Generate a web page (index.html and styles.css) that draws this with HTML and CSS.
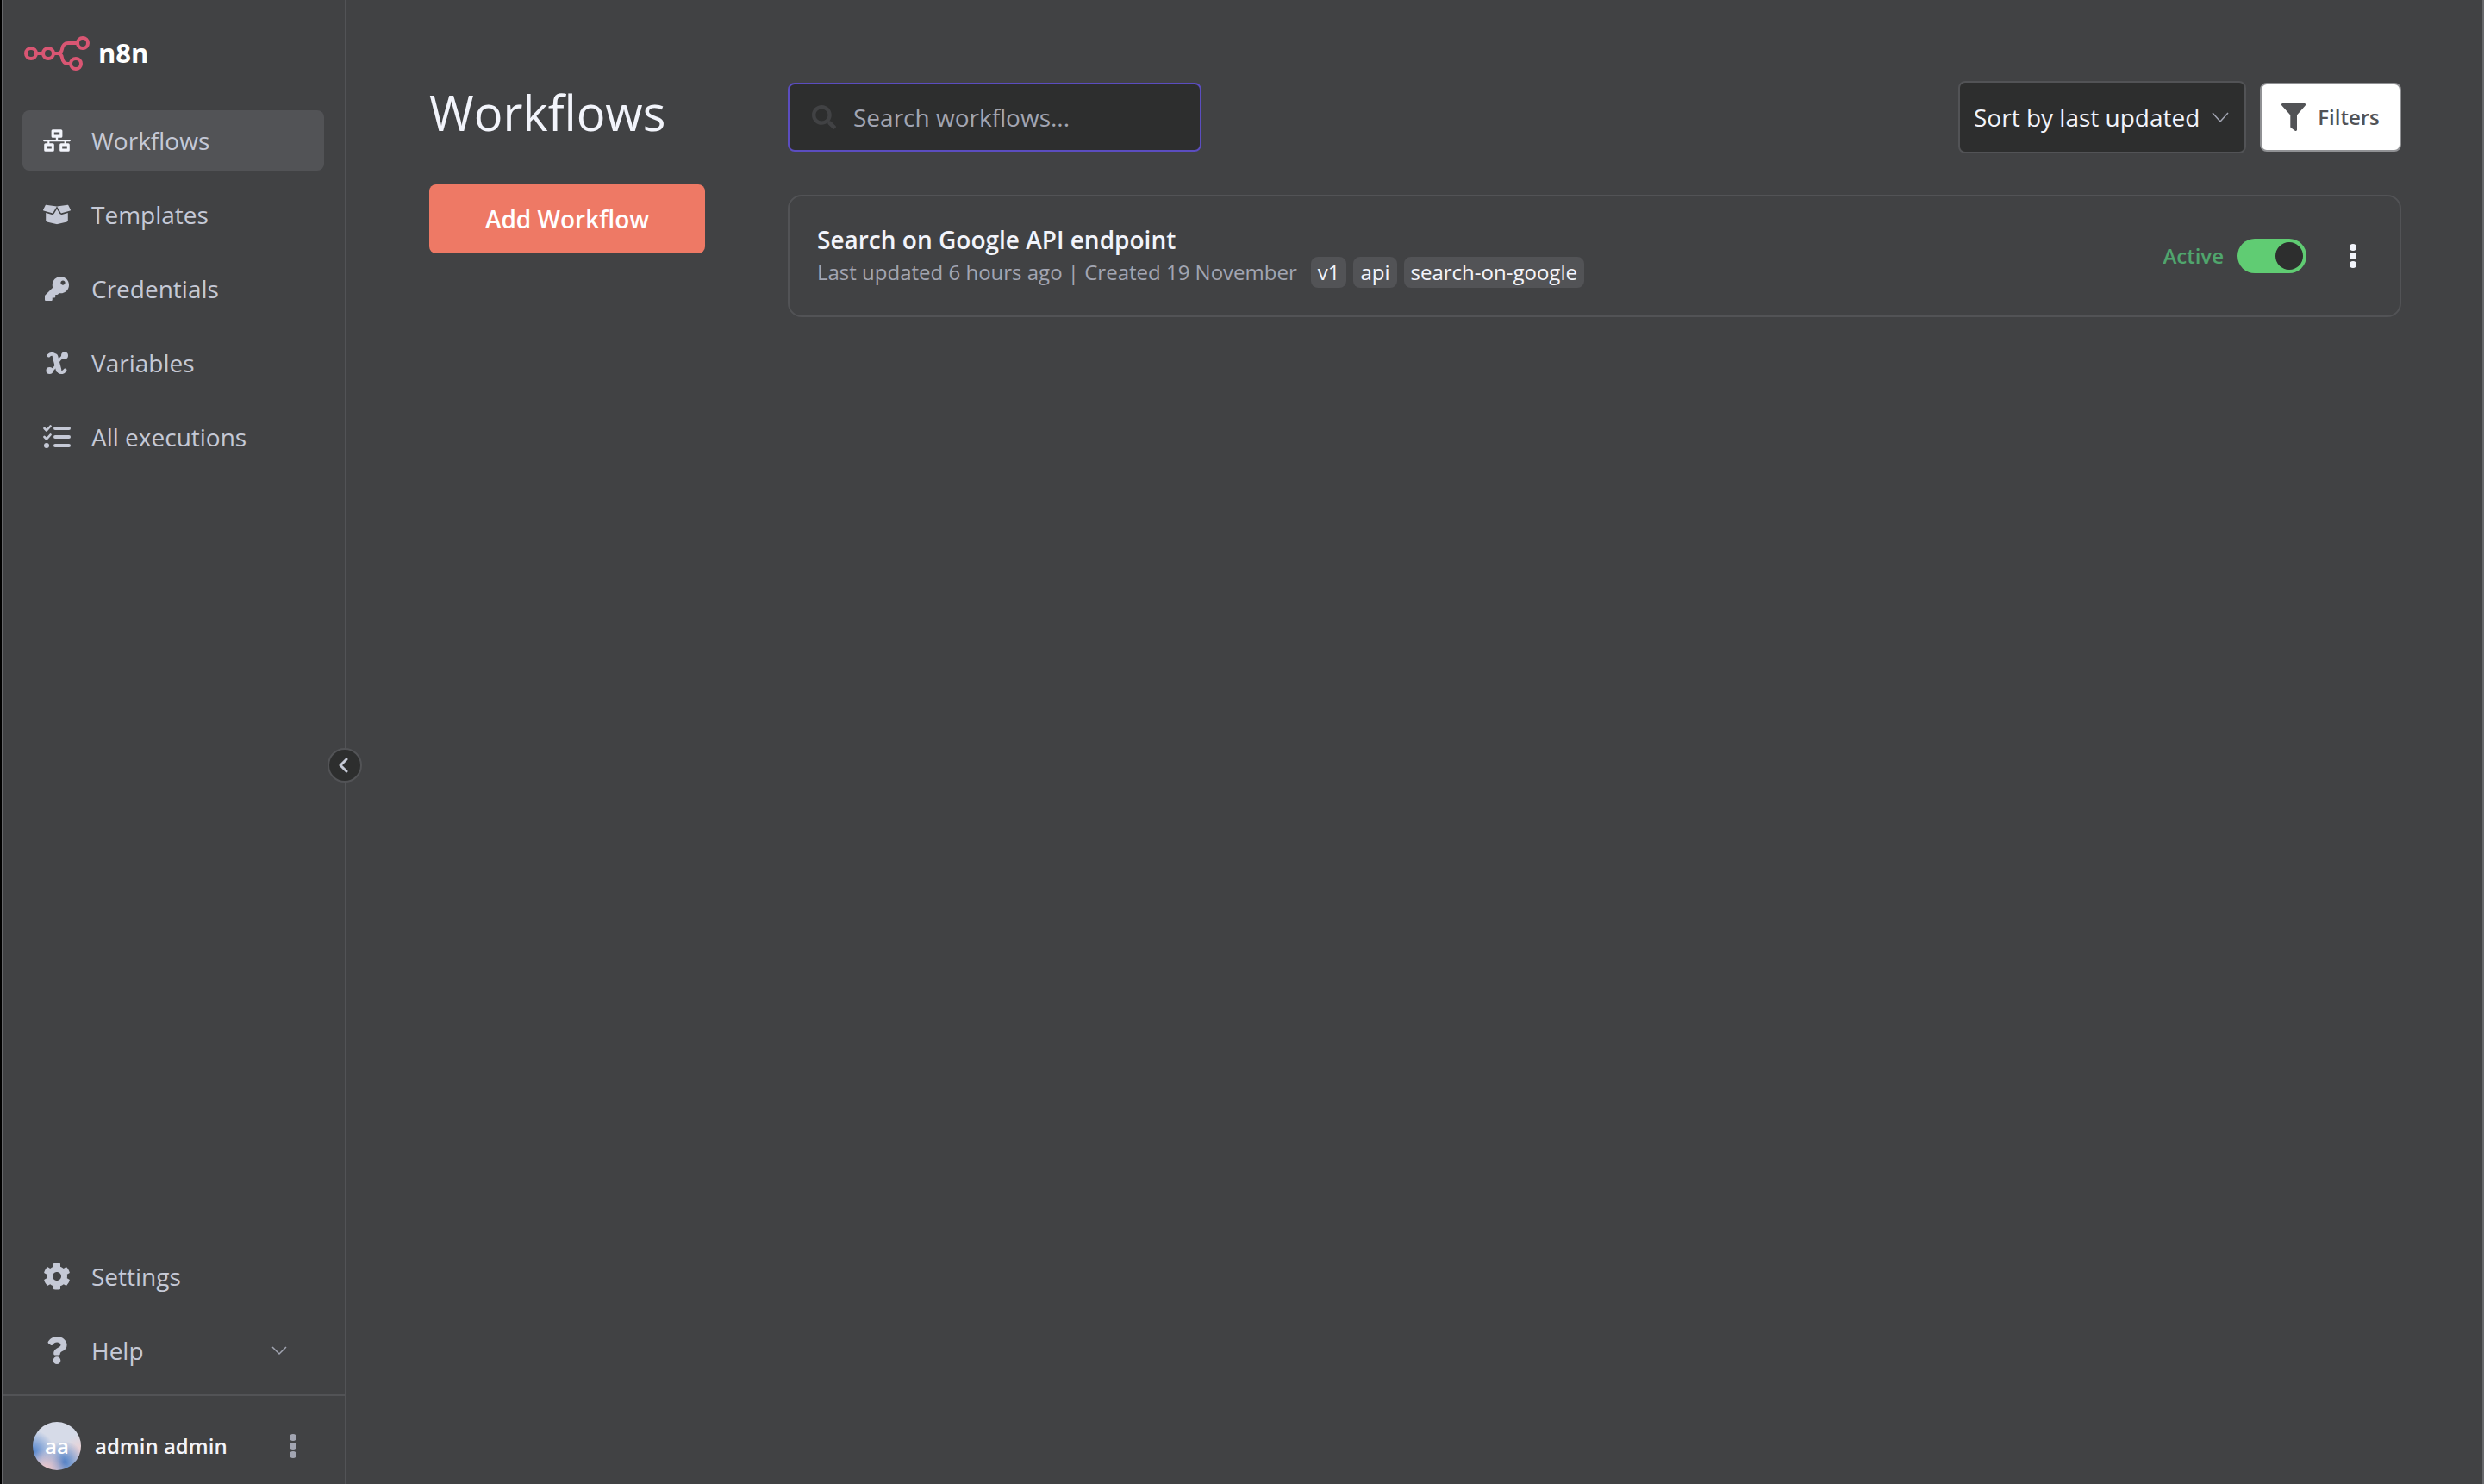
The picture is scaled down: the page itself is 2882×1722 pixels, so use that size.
FILE: index.html
```html
<!DOCTYPE html>
<html lang="en">
<head>
<meta charset="utf-8">
<meta name="viewport" content="width=device-width, initial-scale=1">
<title>Workflows - n8n</title>
<link rel="stylesheet" href="styles.css">
</head>
<body>
<div class="app">
  <aside class="sidebar">
    <a class="logo" href="#" aria-label="n8n home">
      <svg class="logo-mark" viewBox="0 0 76 40" fill="none" stroke="currentColor" stroke-width="4" aria-hidden="true">
        <circle cx="8" cy="20" r="6"/><circle cx="28" cy="20" r="6"/><circle cx="68" cy="8" r="6"/><circle cx="60" cy="32" r="6"/>
        <path d="M14 20h8M34 20h5c3 0 4.500-2 5-5 .8-4.500 2.500-7 7-7h11M39 20c3 0 4.500 2 5 5 .8 4.500 2.500 7 7 7h3"/>
      </svg>
      <span class="logo-text">n8n</span>
    </a>
    <nav class="menu" aria-label="Main">
      <a class="menu-item menu-item-active" href="#">
        <svg class="menu-icon" viewBox="0 0 640 512" fill="currentColor" aria-hidden="true"><path fill-rule="evenodd" d="M224 0h192q32 0 32 32v128q0 32-32 32h-72v44h272q24 0 24 22t-24 22H536v40h48q32 0 32 32v128q0 32-32 32H416q-32 0-32-32V352q0-32 32-32h76v-40H148v40h76q32 0 32 32v128q0 32-32 32H56q-32 0-32-32V352q0-32 32-32h48v-40H24q-24 0-24-22t24-22h272v-44h-72q-32 0-32-32V32q0-32 32-32zm32 64v64h128V64zM84 384v64h112v-64zm360 0v64h112v-64z"/></svg>
        <span>Workflows</span>
      </a>
      <a class="menu-item" href="#">
        <svg class="menu-icon" viewBox="0 0 640 512" fill="currentColor" aria-hidden="true"><path d="M425.700 256c-16.900 0-32.800-9-41.400-23.400L320 126l-64.200 106.600c-8.700 14.500-24.600 23.500-41.500 23.500-4.500 0-9-.6-13.300-1.900L64 215v178c0 14.700 10 27.500 24.200 31l216.200 54.100c10.200 2.500 20.900 2.500 31 0L551.800 424c14.200-3.600 24.200-16.400 24.200-31V215l-137 39.100c-4.300 1.300-8.800 1.900-13.300 1.900zm212.600-112.200L586.800 41c-3.100-6.200-9.800-9.800-16.700-8.900L320 64l91.700 152.100c3.800 6.300 11.400 9.300 18.500 7.300l197.900-56.500c9.900-2.900 14.700-13.900 10.200-23.100zM53.200 41L1.700 143.800c-4.600 9.200.3 20.200 10.100 23l197.900 56.500c7.100 2 14.700-1 18.500-7.300L320 64 69.800 32.100c-6.900-.8-13.500 2.700-16.600 8.900z"/></svg>
        <span>Templates</span>
      </a>
      <a class="menu-item" href="#">
        <svg class="menu-icon menu-icon-small" viewBox="0 0 512 512" fill="currentColor" aria-hidden="true"><path d="M512 176.001C512 273.203 433.202 352 336 352c-11.220 0-22.190-1.062-32.827-3.069l-24.012 27.014A23.999 23.999 0 0 1 261.223 384H224v40c0 13.255-10.745 24-24 24h-40v40c0 13.255-10.745 24-24 24H24c-13.255 0-24-10.745-24-24v-78.059c0-6.365 2.529-12.470 7.029-16.971l161.802-161.802C163.108 213.814 160 195.271 160 176 160 78.798 238.797.001 335.999 0 433.488-.001 512 78.511 512 176.001zM336 128c0 26.510 21.490 48 48 48s48-21.490 48-48-21.490-48-48-48-48 21.490-48 48z"/></svg>
        <span>Credentials</span>
      </a>
      <a class="menu-item" href="#">
        <svg class="menu-icon" viewBox="0 0 32 32" aria-hidden="true"><g fill="none" stroke="currentColor" stroke-linecap="round" stroke-linejoin="round"><path stroke-width="4" d="M6.500 7.500C8.500 5 12 5 13.500 7.500"/><path stroke-width="6.500" d="M14 8.500 18 24"/><path stroke-width="4" d="M18.500 26c2 2 5.500 1 7-1.500"/><path stroke-width="3" d="M17 15c3-4 5-6.500 8-7.500M15.500 18.500c-2.500 4-4.500 6.500-8 7.500"/></g><g fill="currentColor"><circle cx="25" cy="7.500" r="4"/><circle cx="7.500" cy="25" r="4"/></g></svg>
        <span>Variables</span>
      </a>
      <a class="menu-item" href="#">
        <svg class="menu-icon" viewBox="0 0 32 32" aria-hidden="true"><g fill="none" stroke="currentColor" stroke-linecap="round"><path stroke-width="4" d="M14 6h16M14 16h16M14 26h16"/><path stroke-width="2.600" stroke-linejoin="round" d="m1.500 6 2.500 2.500L8.500 3.500M1.500 16l2.500 2.500L8.500 13.500"/></g><circle cx="4" cy="26" r="3" fill="currentColor"/></svg>
        <span>All executions</span>
      </a>
    </nav>
    <nav class="menu menu-bottom" aria-label="Secondary">
      <a class="menu-item" href="#">
        <svg class="menu-icon" viewBox="0 0 512 512" fill="currentColor" aria-hidden="true"><path d="M487.400 315.700l-42.600-24.600c4.300-23.200 4.300-47 0-70.200l42.600-24.600c4.900-2.800 7.100-8.600 5.500-14-11.100-35.600-30-67.800-54.700-94.600-3.800-4.100-10-5.100-14.800-2.300L380.800 110c-17.900-15.400-38.500-27.300-60.800-35.100V25.800c0-5.600-3.900-10.500-9.400-11.700-36.700-8.200-74.300-7.800-109.200 0-5.500 1.200-9.400 6.100-9.400 11.700V75c-22.200 7.900-42.800 19.800-60.800 35.100L88.700 85.500c-4.900-2.800-11-1.900-14.800 2.300-24.700 26.700-43.600 58.900-54.700 94.600-1.700 5.400.6 11.200 5.500 14L67.300 221c-4.300 23.200-4.300 47 0 70.200l-42.600 24.600c-4.900 2.800-7.100 8.600-5.500 14 11.100 35.600 30 67.800 54.700 94.600 3.800 4.100 10 5.100 14.800 2.300l42.600-24.600c17.900 15.400 38.500 27.300 60.800 35.100v49.200c0 5.600 3.900 10.500 9.400 11.700 36.700 8.200 74.300 7.800 109.200 0 5.500-1.200 9.400-6.100 9.400-11.700v-49.200c22.200-7.900 42.800-19.800 60.800-35.100l42.600 24.600c4.900 2.800 11 1.900 14.800-2.300 24.700-26.700 43.600-58.900 54.700-94.600 1.500-5.500-.7-11.300-5.600-14.100zM256 336c-44.100 0-80-35.900-80-80s35.900-80 80-80 80 35.900 80 80-35.900 80-80 80z"/></svg>
        <span>Settings</span>
      </a>
      <a class="menu-item" href="#">
        <svg class="menu-icon" viewBox="0 0 384 512" fill="currentColor" aria-hidden="true"><path d="M202.021 0C122.202 0 70.503 32.703 29.914 91.026c-7.363 10.580-5.093 25.086 5.178 32.874l43.138 32.709c10.373 7.865 25.132 6.026 33.253-4.148 25.049-31.381 43.630-49.449 82.757-49.449 30.764 0 68.816 19.799 68.816 49.631 0 22.552-18.617 34.134-48.993 51.164-35.423 19.860-82.299 44.576-82.299 106.405V320c0 13.255 10.745 24 24 24h72.471c13.255 0 24-10.745 24-24v-5.773c0-42.860 125.268-44.645 125.268-160.627C377.504 66.256 286.902 0 202.021 0zM192 373.459c-38.196 0-69.271 31.075-69.271 69.271 0 38.195 31.075 69.270 69.271 69.270s69.271-31.075 69.271-69.271-31.075-69.270-69.271-69.270z"/></svg>
        <span>Help</span>
        <svg class="menu-arrow" viewBox="0 0 20 12" fill="none" stroke="currentColor" stroke-width="1.500" aria-hidden="true"><path d="m2 2 8 8 8-8"/></svg>
      </a>
    </nav>
    <div class="user">
      <span class="avatar">aa</span>
      <span class="user-name">admin admin</span>
      <button class="dots dots-user" type="button" aria-label="User menu"><svg viewBox="0 0 8 28" fill="currentColor" aria-hidden="true"><circle cx="4" cy="4" r="4"/><circle cx="4" cy="14" r="4"/><circle cx="4" cy="24" r="4"/></svg></button>
    </div>
    <button class="collapse" type="button" aria-label="Collapse sidebar"><svg viewBox="0 0 12 18" fill="none" stroke="currentColor" stroke-width="3" stroke-linecap="round" stroke-linejoin="round" aria-hidden="true"><path d="M9 2 2 9l7 7"/></svg></button>
  </aside>

  <main class="page">
    <section class="intro">
      <h1>Workflows</h1>
      <button class="add" type="button">Add Workflow</button>
    </section>
    <section class="list">
      <div class="toolbar">
        <label class="search">
          <svg viewBox="0 0 512 512" fill="currentColor" aria-hidden="true"><path d="M505 442.700L405.300 343c-4.500-4.500-10.600-7-17-7H372c27.600-35.300 44-79.700 44-128C416 93.100 322.900 0 208 0S0 93.100 0 208s93.100 208 208 208c48.300 0 92.700-16.400 128-44v16.300c0 6.400 2.500 12.500 7 17l99.700 99.700c9.400 9.400 24.600 9.400 33.900 0l28.300-28.300c9.400-9.400 9.400-24.600.1-34zM208 336c-70.700 0-128-57.200-128-128 0-70.700 57.200-128 128-128 70.700 0 128 57.200 128 128 0 70.700-57.200 128-128 128z"/></svg>
          <input type="text" placeholder="Search workflows..." aria-label="Search workflows">
        </label>
        <div class="sort">
          <select aria-label="Sort workflows"><option>Sort by last updated</option><option>Sort by last created</option><option>Sort by name</option></select>
          <svg class="sort-arrow" viewBox="0 0 20 12" fill="none" stroke="currentColor" stroke-width="1.500" aria-hidden="true"><path d="m1 1 9 10 9-10"/></svg>
        </div>
        <button class="filters" type="button">
          <svg viewBox="0 0 28 32" fill="currentColor" aria-hidden="true"><path d="M1.300 0h25.400c1.300 0 1.900 1.500 1 2.400L18 13.500V30.500c0 1.300-1.300 1.900-2.300 1.200L11 28.200c-.5-.4-.7-.8-.7-1.300V13.500L.4 2.400C-.5 1.500 0 0 1.300 0z"/></svg>
          <span>Filters</span>
        </button>
      </div>
      <article class="card">
        <div class="card-body">
          <h2>Search on Google API endpoint</h2>
          <div class="meta">
            <span>Last updated 6 hours ago | Created 19 November</span>
            <ul class="tags"><li>v1</li><li>api</li><li>search-on-google</li></ul>
          </div>
        </div>
        <label class="status"><span>Active</span><input class="switch" type="checkbox" role="switch" checked></label>
        <button class="dots" type="button" aria-label="Workflow actions"><svg viewBox="0 0 8 28" fill="currentColor" aria-hidden="true"><circle cx="4" cy="4" r="4"/><circle cx="4" cy="14" r="4"/><circle cx="4" cy="24" r="4"/></svg></button>
      </article>
    </section>
  </main>
</div>
</body>
</html>
```
FILE: styles.css
```css
:root {
  --bg: #414244;
  --line: #525356;
  --edge: #66676a;
  --field: #2d2e2e;
  --text: #f2f4fb;
  --soft: #c5c9d6;
  --muted: #a2a5b2;
}

* { box-sizing: border-box; }

body {
  margin: 0;
  background: var(--bg);
  color: var(--text);
  font-family: "Open Sans", "Noto Sans", sans-serif;
  font-size: 28px;
  line-height: 36px;
}

button, input, select { font: inherit; color: inherit; }
button { border: 0; padding: 0; background: none; cursor: pointer; }
a { color: inherit; text-decoration: none; }
svg { display: block; }
h1, h2, ul { margin: 0; padding: 0; font-weight: 400; }

.app {
  display: flex;
  min-height: 100vh;
  border-left: 2px solid #000;
  border-right: 2px solid var(--edge);
}

/* Sidebar */
.sidebar {
  position: relative;
  display: flex;
  flex-direction: column;
  flex: 0 0 400px;
  border-left: 2px solid var(--edge);
  border-right: 2px solid var(--line);
}

.logo {
  display: flex;
  align-items: center;
  gap: 10px;
  height: 128px;
  padding: 0 24px 4px;
}

.logo-mark { width: 76px; height: 40px; color: #d95673; }

.logo-text {
  color: #fff;
  font-size: 31px;
  font-weight: 700;
  line-height: 36px;
  padding-bottom: 2px;
}

.menu {
  display: flex;
  flex-direction: column;
  gap: 16px;
  padding: 0 24px 0 22px;
}

.menu-bottom { margin-top: auto; padding-bottom: 16px; }

.menu-item {
  display: flex;
  align-items: center;
  gap: 24px;
  height: 70px;
  padding: 0 24px;
  border-radius: 8px;
  color: var(--soft);
}

.menu-item-active { background: var(--line); }
.menu-item-active .menu-icon { color: var(--text); }
.menu-icon { width: 32px; height: 32px; }
.menu-icon-small { padding: 2px; }
.menu-arrow { width: 20px; height: 12px; margin-left: auto; margin-right: 18px; color: var(--muted); }

.user {
  display: flex;
  align-items: center;
  gap: 16px;
  padding: 30px 56px 16px 34px;
  border-top: 2px solid var(--line);
  font-size: 24px;
  font-weight: 600;
}

.avatar {
  width: 56px;
  height: 56px;
  border-radius: 50%;
  background:
    radial-gradient(circle at 28% 100%, #eec4c8 0, #eec4c800 36%),
    radial-gradient(circle at 64% 84%, #4b7cc4 0, #4b7cc400 42%),
    radial-gradient(circle at 0 62%, #4f82cc 0, #4f82cc00 38%),
    radial-gradient(circle at 100% 60%, #ecd0d3 0, #ecd0d300 30%),
    #d6dbe8;
  color: #fff;
  line-height: 56px;
  text-align: center;
}

.user-name { flex: 1; }

.dots { color: var(--text); }
.dots svg { width: 8px; height: 28px; }
.dots-user { color: var(--muted); }

.collapse {
  position: absolute;
  top: 868px;
  right: -20px;
  display: grid;
  place-items: center;
  width: 40px;
  height: 40px;
  padding-right: 2px;
  border: 2px solid var(--line);
  border-radius: 50%;
  background: var(--field);
  color: var(--soft);
}

.collapse svg { width: 12px; height: 18px; }

/* Page */
.page {
  display: grid;
  grid-template-columns: 320px minmax(0, 1fr);
  flex: 1;
  align-content: start;
  gap: 96px;
  padding: 94px 94px 94px 96px;
}

.intro {
  display: grid;
  align-content: start;
  gap: 48px;
}

h1 { font-size: 56px; line-height: 72px; }

.add {
  height: 80px;
  border-radius: 8px;
  background: #ee7965;
  color: #fff;
  font-weight: 600;
}

.toolbar {
  display: flex;
  align-items: center;
  gap: 16px;
  margin-bottom: 48px;
}

.search {
  display: flex;
  align-items: center;
  gap: 20px;
  width: 480px;
  height: 80px;
  margin-right: auto;
  padding: 0 26px;
  border: 2px solid #5b4dc0;
  border-radius: 8px;
  background: var(--field);
}

.search svg { flex: none; width: 28px; height: 28px; color: var(--bg); }

.search input {
  flex: 1;
  min-width: 0;
  padding: 0;
  border: 0;
  outline: 0;
  background: none;
}

.search input::placeholder { color: var(--muted); opacity: 1; }

.sort { position: relative; }

.sort select {
  appearance: none;
  width: 334px;
  height: 84px;
  padding: 0 16px;
  border: 2px solid var(--line);
  border-radius: 8px;
  background: var(--field);
}

.sort-arrow {
  position: absolute;
  top: 36px;
  right: 20px;
  width: 20px;
  height: 12px;
  color: var(--muted);
  pointer-events: none;
}

.filters {
  display: flex;
  align-items: center;
  justify-content: center;
  gap: 14px;
  width: 164px;
  height: 80px;
  border: 2px solid #909194;
  border-radius: 8px;
  background: #fff;
  color: var(--line);
  font-size: 24px;
  font-weight: 600;
}

.filters svg { width: 28px; height: 32px; }

/* Workflow card */
.card {
  display: flex;
  align-items: center;
  min-height: 142px;
  padding: 0 50px 0 32px;
  border: 2px solid var(--line);
  border-radius: 16px;
}

.card-body { flex: 1; }

h2 { margin-bottom: 2px; font-size: 28px; font-weight: 600; line-height: 36px; }

.meta {
  display: flex;
  align-items: center;
  gap: 16px;
  color: var(--muted);
  font-size: 24px;
}

.tags {
  display: flex;
  gap: 8px;
  color: var(--text);
  list-style: none;
}

.tags li {
  padding: 0 8px;
  border-radius: 8px;
  background: var(--line);
}

.status {
  display: flex;
  align-items: center;
  gap: 16px;
  margin-right: 50px;
  color: #50a56d;
  font-size: 24px;
  font-weight: 600;
}

.switch {
  appearance: none;
  width: 80px;
  height: 40px;
  margin: 0;
  padding: 4px;
  border-radius: 20px;
  background: #60cc73;
}

.switch::before {
  display: block;
  width: 32px;
  height: 32px;
  margin-left: auto;
  border-radius: 50%;
  background: var(--field);
  content: "";
}
```
